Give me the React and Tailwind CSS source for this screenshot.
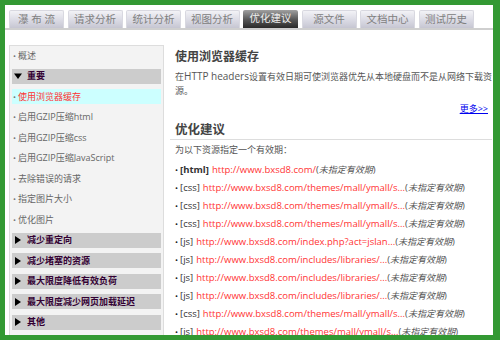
const FONT = "font-['Open_Sans','Noto_Sans_CJK_SC',sans-serif]";

const tabs = ["瀑 布 流", "请求分析", "统计分析", "视图分析", "优化建议", "源文件", "文档中心", "测试历史"];

const resources = [
  { type: "html", url: "http://www.bxsd8.com/" },
  { type: "css", url: "http://www.bxsd8.com/themes/mall/ymall/s..." },
  { type: "css", url: "http://www.bxsd8.com/themes/mall/ymall/s..." },
  { type: "css", url: "http://www.bxsd8.com/themes/mall/ymall/s..." },
  { type: "js", url: "http://www.bxsd8.com/index.php?act=jslan..." },
  { type: "js", url: "http://www.bxsd8.com/includes/libraries/..." },
  { type: "js", url: "http://www.bxsd8.com/includes/libraries/..." },
  { type: "js", url: "http://www.bxsd8.com/includes/libraries/..." },
  { type: "css", url: "http://www.bxsd8.com/themes/mall/ymall/s..." },
  { type: "js", url: "http://www.bxsd8.com/themes/mall/ymall/s..." },
];

function Arrow({ down }) {
  return (
    <svg width="8" height="8" viewBox="0 0 8 8" className="shrink-0">
      {down ? <path d="M0 1.5h8L4 7z" fill="#000" /> : <path d="M1 0v8l6-4z" fill="#000" />}
    </svg>
  );
}

function Tab({ label, active }) {
  return (
    <div
      className={
        active
          ? "flex h-[18px] w-[55px] items-center justify-center rounded-t-[2px] bg-[linear-gradient(180deg,#a0a0a0_0%,#555_55%,#2a2a2a_100%)] text-[10.5px] text-[#eee]"
          : "flex h-[18px] w-[55px] items-center justify-center rounded-t-[2px] border border-b-0 border-[#d8d8e0] bg-[linear-gradient(180deg,#f2f2f6_0%,#d8d8e2_60%,#c6c6d2_100%)] text-[10.5px] text-[#808080]"
      }
    >
      {label}
    </div>
  );
}

function SideItem({ label, active }) {
  return (
    <div
      className={
        active
          ? "flex h-[15px] items-center gap-[2px] bg-[#ccffff] pl-[1px] text-[9px] text-[#ff3333]"
          : "flex h-[15px] items-center gap-[2px] pl-[1px] text-[9px] text-[#666]"
      }
    >
      <span className="text-[8px] text-[#777]">•</span>
      {label}
    </div>
  );
}

function SideHeader({ label, open }) {
  return (
    <div className="flex h-[15px] items-center gap-[5px] bg-[#cccccc] pl-[2px] text-[9px] font-bold text-[#330033]">
      <Arrow down={open} />
      {label}
    </div>
  );
}

export default function App() {
  return (
    <div className={`h-[340px] w-[500px] overflow-hidden bg-[#339933] pb-[5px] pl-[5px] pr-[7px] pt-[5px] ${FONT}`}>
      <div className="flex h-full flex-col overflow-hidden bg-white">
        <div className="flex h-[25px] shrink-0 items-end gap-[3.5px] border-b-2 border-[#cfcfcf] pl-[4px]">
          {tabs.map((t) => (
            <Tab key={t} label={t} active={t === "优化建议"} />
          ))}
        </div>

        <div className="flex min-h-0 flex-1 pl-[4px] pt-[15px]">
          <aside className="flex w-[155px] shrink-0 flex-col gap-[5.5px] border border-b-0 border-[#dddddd] bg-[#f3f3f3] px-[2px] pt-[2px]">
            <SideItem label="概述" />
            <SideHeader label="重要" open />
            <SideItem label="使用浏览器缓存" active />
            <SideItem label="启用GZIP压缩html" />
            <SideItem label="启用GZIP压缩css" />
            <SideItem label="启用GZIP压缩JavaScript" />
            <SideItem label="去除错误的请求" />
            <SideItem label="指定图片大小" />
            <SideItem label="优化图片" />
            <SideHeader label="减少重定向" />
            <SideHeader label="减少堵塞的资源" />
            <SideHeader label="最大限度降低有效负荷" />
            <SideHeader label="最大限度减少网页加载延迟" />
            <SideHeader label="其他" />
          </aside>

          <main className="min-w-0 flex-1 pl-[6px] pr-[1px]">
            <div className="pl-[5px] pr-[4px]">
              <h2 className="mt-[4px] text-[12px] font-bold leading-[16px] text-[#444]">使用浏览器缓存</h2>
              <p className="mt-[4px] text-[9px] leading-[14px] text-[#555]">
                <span className="whitespace-nowrap">
                  在<span className="text-[10px]">HTTP headers</span>设置有效日期可使浏览器优先从本地硬盘而不是从网络下载资
                </span>
                <br />
                源。
              </p>
              <div className="mt-[4px] text-right text-[9px] leading-[14px]">
                <a className="text-[#0000ee] underline">更多&gt;&gt;</a>
              </div>
            </div>

            <h2 className="mt-[5px] border-b border-[#dddddd] pl-[5px] text-[12.5px] font-bold leading-[18px] text-[#444]">
              优化建议
            </h2>

            <div className="pl-[5px]">
              <p className="mt-[3px] text-[9px] leading-[14px] text-[#555]">为以下资源指定一个有效期：</p>
              <ul className="mt-[4px]">
                {resources.map((r, i) => (
                  <li key={i} className="flex h-[18px] items-center whitespace-nowrap text-[9.5px]">
                    <span className="mr-[2px] text-[8px] text-[#222]">•</span>
                    <span className={r.type === "html" ? "font-bold text-[#333]" : "text-[#333]"}>[{r.type}]</span>
                    <span className="ml-[3px] text-[#ff3333]">{r.url}</span>
                    <span className="text-[#555]">(</span>
                    <span className="text-[9px] italic text-[#555]">未指定有效期</span>
                    <span className="text-[#555]">)</span>
                  </li>
                ))}
              </ul>
            </div>
          </main>
        </div>
      </div>
    </div>
  );
}
